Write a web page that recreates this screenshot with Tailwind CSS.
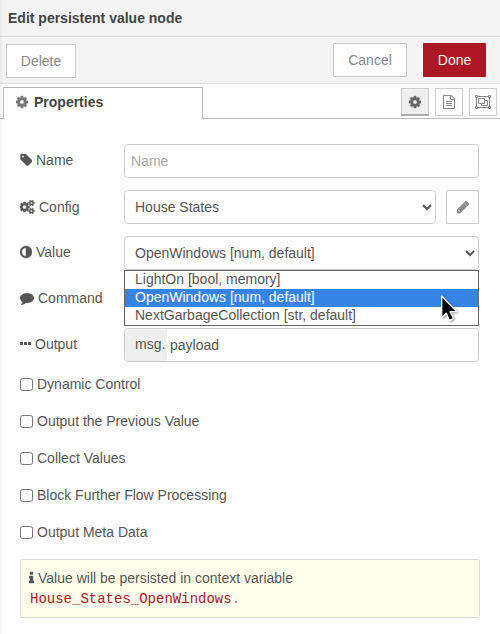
<!DOCTYPE html>
<html lang="en">
<head>
<meta charset="utf-8">
<title>Edit persistent value node</title>
<script src="https://cdn.jsdelivr.net/npm/@tailwindcss/browser@4"></script>
</head>
<body class="relative w-[500px] h-[634px] overflow-hidden bg-white font-['Liberation_Sans',Arial,sans-serif] text-[14px] leading-[20px] text-[#555]">

<svg class="hidden">
  <symbol id="cog" viewBox="128 0 1536 1792"><path d="M1152 896q0-106-75-181t-181-75-181 75-75 181 75 181 181 75 181-75 75-181zm512-109v222q0 12-8 23t-20 13l-185 28q-19 54-39 91 35 50 107 138 10 12 10 25t-9 23q-27 37-99 108t-94 71q-12 0-26-9l-138-108q-44 23-91 38-16 136-29 186-7 28-36 28h-222q-14 0-24.500-8.500t-11.500-21.500l-28-184q-49-16-90-37l-141 107q-10 9-25 9-14 0-25-11-126-114-165-168-7-10-7-23 0-12 8-23 15-21 51-66.500t54-70.500q-27-50-41-99l-183-27q-13-2-21-12.500t-8-23.500v-222q0-12 8-23t19-13l186-28q14-46 39-92-40-57-107-138-10-12-10-24 0-10 9-23 26-36 98.500-107.500t94.500-71.500q13 0 26 10l138 107q44-23 91-38 16-136 29-186 7-28 36-28h222q14 0 24.500 8.500t11.500 21.500l28 184q49 16 90 37l142-107q9-9 24-9 13 0 25 10 129 119 165 170 7 8 7 22 0 12-8 23-15 21-51 66.500t-54 70.500q26 50 41 98l183 28q13 2 21 12.500t8 23.500z"/></symbol>
</svg>

<header class="h-[37px] border-b border-[#ddd] bg-[#f3f3f3] pl-2 pt-2 font-bold text-[#444]">Edit persistent value node</header>

<div class="flex h-[47px] items-start border-b border-[#ddd] bg-[#f3f3f3] pl-1.5 pr-3.5 pt-1.5">
  <button class="mt-px h-[34px] w-[70px] border border-[#ccc] bg-white text-[#888]">Delete</button>
  <button class="ml-auto h-[34px] w-[74px] rounded-[1px] border border-[#ccc] bg-white text-[#888]">Cancel</button>
  <button class="ml-4 h-[34px] w-[63px] rounded-[1px] bg-[#ad1625] text-[#eee]">Done</button>
</div>

<nav class="flex h-[35px] items-end">
  <div class="h-[35px] w-[3px] border-b border-[#bbb]"></div>
  <div class="flex h-8 w-[200px] items-start border-x border-t border-[#bbb] pl-3 pt-1 font-bold text-[#444]">
    <svg class="mr-1.5 mt-[3px] h-3.5 w-3 fill-[#777] stroke-[#777] [stroke-width:50]"><use href="#cog"/></svg>Properties
  </div>
  <div class="flex h-[35px] flex-1 items-start justify-end gap-1.5 border-b border-[#bbb] pr-[3px] pt-1">
    <button class="flex h-7 w-7 items-center justify-center border border-b-2 border-[#ccc] border-b-[#aaa] bg-[#efefef]"><svg class="h-3.5 w-3 fill-[#666] stroke-[#666] [stroke-width:50]"><use href="#cog"/></svg></button>
    <button class="flex h-7 w-7 items-center justify-center border border-[#ccc] bg-white"><svg class="h-3.5 w-3 fill-[#888]" viewBox="128 0 1536 1792"><path d="M1596 380q28 28 48 76t20 88v1152q0 40-28 68t-68 28h-1344q-40 0-68-28t-28-68v-1600q0-40 28-68t68-28h896q40 0 88 20t76 48zm-444-244v376h376q-10-29-22-41l-313-313q-12-12-41-22zm384 1528v-1024h-416q-40 0-68-28t-28-68v-416h-768v1536h1280zm-1024-864q0-14 9-23t23-9h704q14 0 23 9t9 23v64q0 14-9 23t-23 9h-704q-14 0-23-9t-9-23v-64zm736 224q14 0 23 9t9 23v64q0 14-9 23t-23 9h-704q-14 0-23-9t-9-23v-64q0-14 9-23t23-9h704zm0 256q14 0 23 9t9 23v64q0 14-9 23t-23 9h-704q-14 0-23-9t-9-23v-64q0-14 9-23t23-9h704z"/></svg></button>
    <button class="flex h-7 w-7 items-center justify-center border border-[#ccc] bg-white"><svg class="h-3.5 w-4" viewBox="0 0 16 14" fill="none" stroke="#888"><path d="M3 1.500h10M3 12.500h10M1.500 3v8M14.500 3v8"/><path d="M.5.5h2v2h-2zM13.500.5h2v2h-2zM.5 11.500h2v2h-2zM13.500 11.500h2v2h-2z"/><path d="M3.500 3.500h6v5h-6zM9.500 5.500h3v5h-6v-2"/></svg></button>
  </div>
</nav>

<main class="pl-5 pr-[21px] pt-[25px]">
  <div class="mb-3 flex h-[34px]">
    <label class="flex h-5 w-[104px] items-center gap-1 mt-1.5"><svg class="h-3.5 w-3 fill-[#555] stroke-[#555] [stroke-width:50]" viewBox="64 0 1536 1792"><path d="M576 448q0-53-37.500-90.500t-90.500-37.500-90.500 37.500-37.500 90.500 37.500 90.500 90.500 37.500 90.500-37.500 37.500-90.500zm1067 576q0 53-37 90l-491 492q-39 37-91 37-53 0-90-37l-715-716q-38-37-64.500-101t-26.500-117v-416q0-52 38-90t90-38h416q53 0 117 26.500t102 64.500l715 714q37 39 37 91z"/></svg>Name</label>
    <input type="text" placeholder="Name" class="h-[34px] flex-1 rounded border border-[#ccc] bg-white px-1.5 placeholder:text-[#aaa]">
  </div>

  <div class="mb-3 flex h-[34px]">
    <label class="flex h-5 w-[104px] items-center gap-1 mt-[7px]"><svg class="h-3.5 w-[15px] fill-[#555] stroke-[#555] [stroke-width:60]" viewBox="0 0 1920 1792"><path d="M832 896q0-106-75-181t-181-75-181 75-75 181 75 181 181 75 181-75 75-181zm768 512q0-52-38-90t-90-38-90 38-38 90q0 53 37.500 90.500t90.500 37.500 90.500-37.500 37.500-90.500zm0-1024q0-52-38-90t-90-38-90 38-38 90q0 53 37.500 90.500t90.500 37.500 90.500-37.500 37.500-90.500zm-384 421v185q0 10-7 19.500t-16 10.500l-155 24q-11 35-32 76 34 48 90 115 7 11 7 20 0 12-7 19-23 30-82.500 89.500t-78.500 59.500q-11 0-21-7l-115-90q-37 19-77 31-11 108-23 155-7 24-30 24h-186q-11 0-20-7.500t-10-17.500l-23-153q-34-10-75-31l-118 89q-7 7-20 7-11 0-21-8-144-133-144-160 0-9 7-19 10-14 41-53t47-61q-23-44-35-82l-152-24q-10-1-17-9.500t-7-19.500v-185q0-10 7-19.500t16-10.500l155-24q11-35 32-76-34-48-90-115-7-11-7-20 0-12 7-20 22-30 82-89t79-59q11 0 21 7l115 90q34-18 77-32 11-108 23-154 7-24 30-24h186q11 0 20 7.500t10 17.500l23 153q34 10 75 31l118-89q8-7 20-7 11 0 21 8 144 133 144 160 0 8-7 19-12 16-42 54t-45 60q23 48 34 82l152 23q10 2 17 10.500t7 19.500zm640 533v140q0 16-149 31-12 27-30 52 51 113 51 138 0 4-4 7-122 71-124 71-8 0-46-47t-52-68q-20 2-30 2t-30-2q-14 21-52 68t-46 47q-2 0-124-71-4-3-4-7 0-25 51-138-18-25-30-52-149-15-149-31v-140q0-16 149-31 13-29 30-52-51-113-51-138 0-4 4-7 4-2 35-20t59-34 30-16q8 0 46 46.500t52 67.500q20-2 30-2t30 2q51-71 92-112l6-2q4 0 124 70 4 3 4 7 0 25-51 138 17 23 30 52 149 15 149 31zm0-1024v140q0 16-149 31-12 27-30 52 51 113 51 138 0 4-4 7-122 71-124 71-8 0-46-47t-52-68q-20 2-30 2t-30-2q-14 21-52 68t-46 47q-2 0-124-71-4-3-4-7 0-25 51-138-18-25-30-52-149-15-149-31v-140q0-16 149-31 13-29 30-52-51-113-51-138 0-4 4-7 4-2 35-20t59-34 30-16q8 0 46 46.500t52 67.500q20-2 30-2t30 2q51-71 92-112l6-2q4 0 124 70 4 3 4 7 0 25-51 138 17 23 30 52 149 15 149 31z"/></svg>Config</label>
    <select class="h-[34px] flex-1 rounded border border-[#ccc] bg-white px-1.5"><option>House States</option></select>
    <button class="ml-2.5 flex h-[34px] w-[33px] items-center justify-center rounded-[1px] border border-[#ccc] bg-white"><svg class="h-3.5 w-3 fill-[#888] stroke-[#888] [stroke-width:90]" viewBox="128 0 1536 1792"><path d="M491 1536l91-91-235-235-91 91v107h128v128h107zm523-928q0-22-22-22-10 0-17 7l-542 542q-7 7-7 17 0 22 22 22 10 0 17-7l542-542q7-7 7-17zm-54-192l416 416-832 832h-416v-416zm683 96q0 53-37 90l-166 166-416-416 166-165q36-38 90-38 53 0 91 38l235 234q37 39 37 91z"/></svg></button>
  </div>

  <div class="relative mb-3 flex h-[34px]">
    <label class="flex h-5 w-[104px] items-center gap-1 mt-1.5"><svg class="h-3.5 w-3 fill-[#555] stroke-[#555] [stroke-width:60]" viewBox="128 0 1536 1792"><path d="M896 1440v-1088q-148 0-273 73t-198 198-73 273 73 273 198 198 273 73zm768-544q0 209-103 385.500t-279.500 279.500-385.500 103-385.500-103-279.500-279.500-103-385.500 103-385.500 279.500-279.500 385.500-103 385.500 103 279.500 279.500 103 385.500z"/></svg>Value</label>
    <select class="h-[34px] flex-1 rounded border border-[#ccc] bg-white px-1.5"><option>OpenWindows [num, default]</option></select>
    <div class="absolute left-[104px] right-0 top-[34px] z-10 border border-[#666] bg-white leading-[16px]">
      <div class="h-[18px] pl-2.5">LightOn [bool, memory]</div>
      <div class="h-[18px] bg-[#3584e4] pl-2.5 text-white">OpenWindows [num, default]</div>
      <div class="h-[18px] pl-2.5">NextGarbageCollection [str, default]</div>
    </div>
    <svg class="absolute left-[420px] top-[58px] z-20 h-[30px] w-5 drop-shadow-[1px_1px_1px_rgba(0,0,0,0.4)]" viewBox="0 0 20 30"><path d="M1.700 2v21.500l4.600-4.300 3.200 7.200 4-1.800-3.300-7h6.500z" fill="#000" stroke="#fff" stroke-width="1.300" stroke-linejoin="round"/></svg>
  </div>

  <div class="mb-3 flex h-[34px]">
    <label class="flex h-5 w-[104px] items-center gap-1 mt-1.5"><svg class="h-3.5 w-3.5 fill-[#555]" viewBox="0 0 1792 1792"><path d="M1792 896q0 174-120 321.500t-326 233-450 85.500q-70 0-145-8-198 175-460 242-49 14-114 22-17 2-30.500-9t-17.500-29v-1q-3-4-.5-12t2-10 4.500-9.500l6-9 7-8.500 8-9q7-8 31-34.500t34.500-38 31-39.500 32.500-51 27-59 26-76q-157-89-247.500-220t-90.500-281q0-130 71-248.500t191-204.500 286-136.500 348-50.500q244 0 450 85.500t326 233 120 321.500z"/></svg>Command</label>
  </div>

  <div class="mb-3 flex h-[34px]">
    <label class="flex h-5 w-[104px] items-center gap-1 mt-1.5"><svg class="h-3.5 w-[11px] fill-[#555]" viewBox="0 0 11 14"><rect y="5" width="3" height="3" rx=".5"/><rect x="4" y="5" width="3" height="3" rx=".5"/><rect x="8" y="5" width="3" height="3" rx=".5"/></svg>Output</label>
    <div class="flex h-[34px] flex-1 overflow-hidden rounded border border-[#ccc] bg-white">
      <div class="w-[42px] bg-[#efefef] pl-2.5 pt-[5px]">msg.</div>
      <div class="pl-[3px] pt-1.5">payload</div>
    </div>
  </div>

  <div class="flex flex-col gap-[17px]">
    <label class="flex h-5 items-center gap-1"><input type="checkbox" class="m-0 mt-px h-[13px] w-[13px]">Dynamic Control</label>
    <label class="flex h-5 items-center gap-1"><input type="checkbox" class="m-0 mt-px h-[13px] w-[13px]">Output the Previous Value</label>
    <label class="flex h-5 items-center gap-1"><input type="checkbox" class="m-0 mt-px h-[13px] w-[13px]">Collect Values</label>
    <label class="flex h-5 items-center gap-1"><input type="checkbox" class="m-0 mt-px h-[13px] w-[13px]">Block Further Flow Processing</label>
    <label class="flex h-5 items-center gap-1"><input type="checkbox" class="m-0 mt-px h-[13px] w-[13px]">Output Meta Data</label>
  </div>

  <div class="mt-[17px] -mr-px h-[59px] rounded-[2px] border border-[#ddd] bg-[#ffffec] px-2 pt-2">
    <div class="flex h-5 items-center gap-1"><svg class="h-3.5 w-[5px] fill-[#555] stroke-[#555] [stroke-width:60]" viewBox="576 0 640 1792"><path d="M1216 1344v128q0 26-19 45t-45 19h-512q-26 0-45-19t-19-45v-128q0-26 19-45t45-19h64v-384h-64q-26 0-45-19t-19-45v-128q0-26 19-45t45-19h384q26 0 45 19t19 45v576h64q26 0 45 19t19 45zm-128-1152v192q0 26-19 45t-45 19h-256q-26 0-45-19t-19-45v-192q0-26 19-45t45-19h256q26 0 45 19t19 45z"/></svg>Value will be persisted in context variable</div>
    <div class="h-5 pl-px pt-px font-['Liberation_Mono',monospace] text-[#ad1625]">House_States_OpenWindows<span class="text-[#a66]">.</span></div>
  </div>
</main>

<div class="pointer-events-none absolute inset-y-0 left-0 w-[3px] bg-linear-to-r from-black/5 to-transparent"></div>
</body>
</html>
